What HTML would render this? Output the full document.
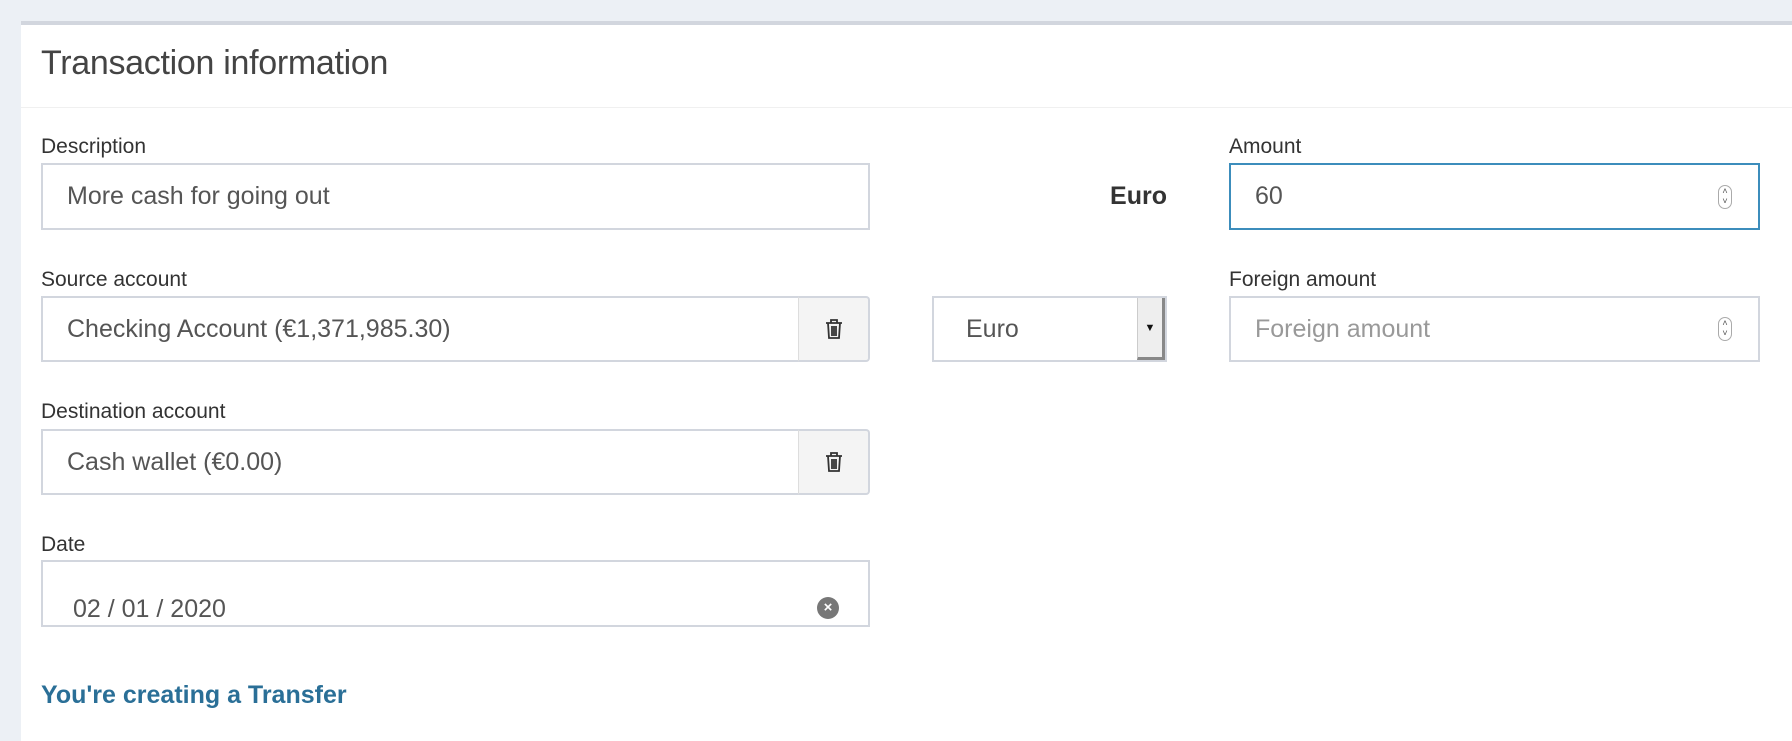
<!DOCTYPE html>
<html><head><meta charset="utf-8"><style>
*{box-sizing:border-box;margin:0;padding:0}
body{width:1792px;height:734px;background:#ecf0f5;font-family:"Liberation Sans",sans-serif;color:#333;overflow:hidden;position:relative}
.card{position:absolute;left:21px;top:21px;width:1780px;height:720px;background:#fff;border-top:4px solid #d2d6de}
.abs{position:absolute}
.title{left:20px;top:19px;font-size:34px;color:#444;letter-spacing:-0.3px}
.sep{left:0;top:82px;width:100%;height:1px;background:#f0f0f0}
.lbl{font-size:21px;color:#333}
.inp{border:2px solid #d2d6de;background:#fff;font-size:25px;color:#555;padding-left:24px;display:flex;align-items:center}
.btn{border:2px solid #d2d6de;border-left:1px solid #ddd;background:#f4f4f4;border-radius:0 4px 4px 0;display:flex;align-items:center;justify-content:center}
.spin{position:absolute;right:26px;top:50%;transform:translateY(-50%);width:14px;height:24px;border:1px solid #aaa;border-radius:7px;font-size:9px;line-height:10px;text-align:center;color:#555}
</style></head><body>
<div class="card">
<div class="abs title">Transaction information</div>
<div class="abs sep"></div>

<div class="abs lbl" style="left:20px;top:110px">Description</div>
<div class="abs inp" style="left:20px;top:138px;width:829px;height:67px">More cash for going out</div>

<div class="abs" style="left:946px;top:157px;width:200px;text-align:right;font-size:25px;font-weight:bold;color:#333">Euro</div>
<div class="abs lbl" style="left:1208px;top:110px">Amount</div>
<div class="abs inp" style="left:1208px;top:138px;width:531px;height:67px;border-color:#3c8dbc">60<div class="spin">˄<br>˅</div></div>

<div class="abs lbl" style="left:20px;top:243px">Source account</div>
<div class="abs inp" style="left:20px;top:271px;width:759px;height:66px">Checking Account (€1,371,985.30)</div>
<div class="abs btn" style="left:777px;top:271px;width:72px;height:66px"><svg width="18" height="22" viewBox="0 0 18 22" fill="none" stroke="#333" stroke-width="1.8"><path d="M1 5h16M6 5V2h6v3M3 5l1 15h10l1-15M7 8v10M9 8v10M11 8v10"/></svg></div>

<div class="abs inp" style="left:911px;top:271px;width:235px;height:66px;padding-left:32px">Euro</div>
<div class="abs" style="left:1116px;top:273px;width:28px;height:62px;background:#eee;border-left:1px solid #ccc;border-right:3px solid #888;border-bottom:3px solid #888;display:flex;align-items:center;justify-content:center;font-size:11px;color:#111">▼</div>

<div class="abs lbl" style="left:1208px;top:243px">Foreign amount</div>
<div class="abs inp" style="left:1208px;top:271px;width:531px;height:66px;color:#999">Foreign amount<div class="spin">˄<br>˅</div></div>

<div class="abs lbl" style="left:20px;top:375px">Destination account</div>
<div class="abs inp" style="left:20px;top:404px;width:759px;height:66px">Cash wallet (€0.00)</div>
<div class="abs btn" style="left:777px;top:404px;width:72px;height:66px"><svg width="18" height="22" viewBox="0 0 18 22" fill="none" stroke="#333" stroke-width="1.8"><path d="M1 5h16M6 5V2h6v3M3 5l1 15h10l1-15M7 8v10M9 8v10M11 8v10"/></svg></div>

<div class="abs lbl" style="left:20px;top:508px">Date</div>
<div class="abs inp" style="left:20px;top:535px;width:829px;height:67px;align-items:flex-end;padding-left:30px;padding-bottom:1px">02 / 01 / 2020</div>
<div class="abs" style="left:796px;top:572px;width:22px;height:22px;border-radius:50%;background:#777;color:#fff;font-size:15px;font-weight:bold;line-height:22px;text-align:center">×</div>

<div class="abs" style="left:20px;top:656px;font-size:25px;font-weight:bold;color:#2a6f97">You're creating a Transfer</div>
</div>
</body></html>
